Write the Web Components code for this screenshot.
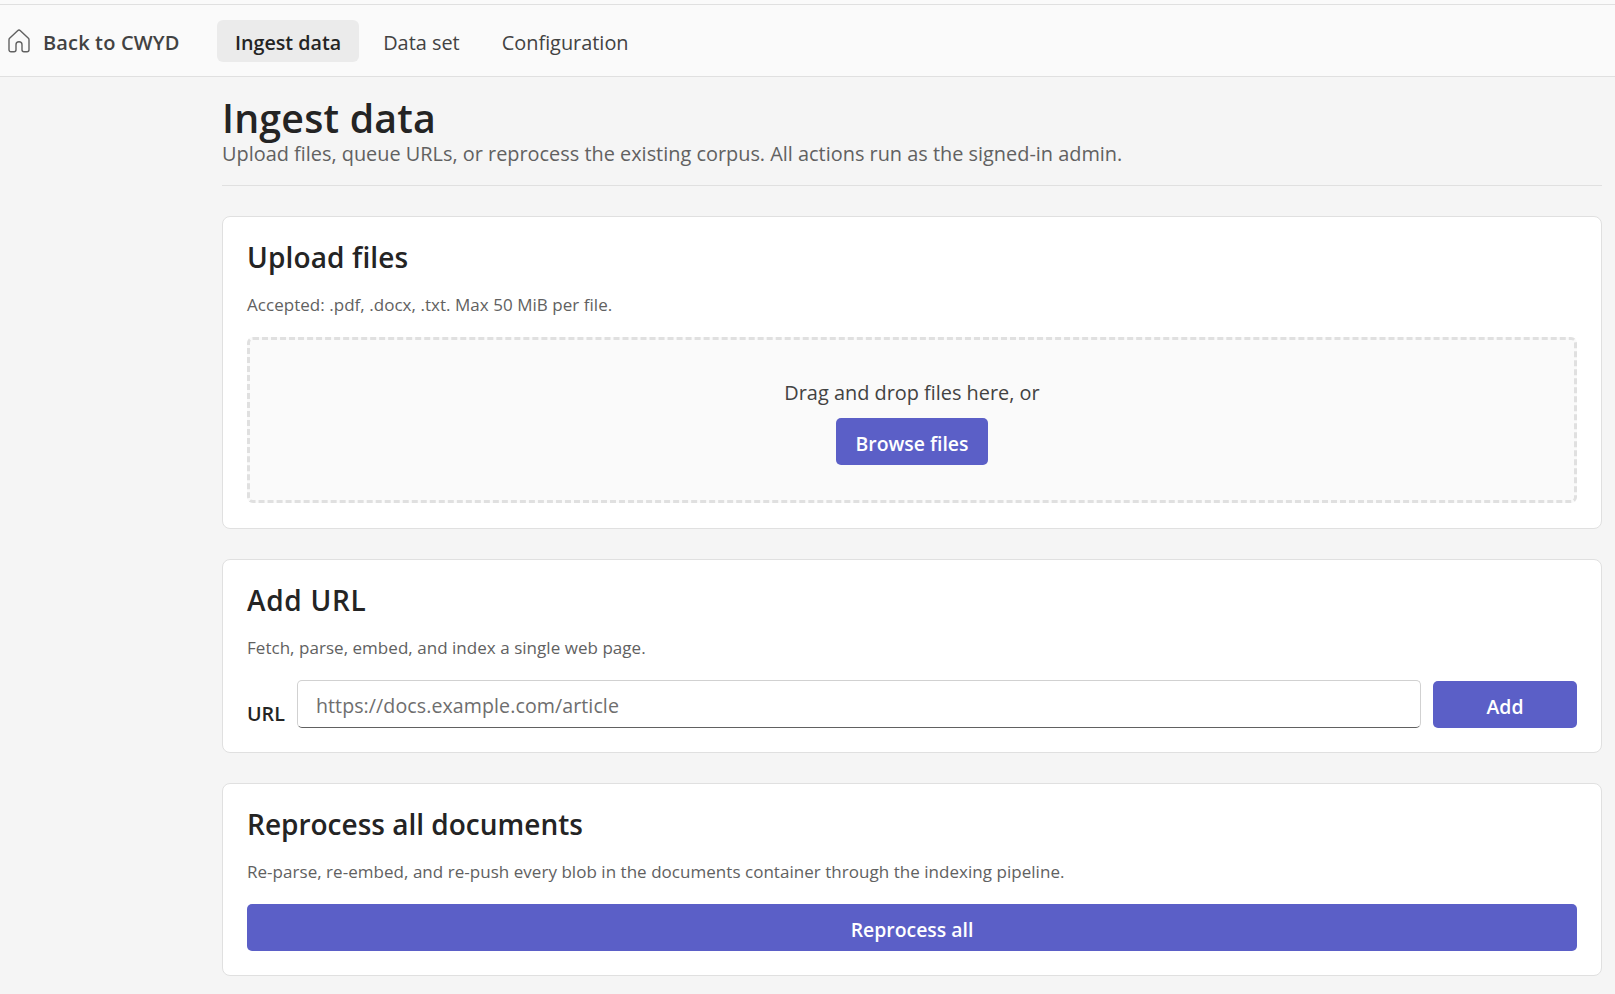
<!DOCTYPE html>
<html lang="en"><head><meta charset="utf-8"><title>Ingest data</title>
<style>
html,body{margin:0;height:100%;background:#f5f5f5}
body{font-family:"Open Sans","Noto Sans",sans-serif;color:#242424}
</style></head>
<body>
<template id="t-shell"><style>
:host{display:flex;flex-direction:column;min-height:994px;box-sizing:border-box;background:#f5f5f5}
.top{height:4px;background:#fafafa;flex:none}
main{display:flex;flex-direction:column;padding:19px 13px 0 222px}
.cards{display:flex;flex-direction:column;gap:30.5px;padding-top:30px}
</style><div class="top"></div><slot name="nav"></slot><main><slot name="header"></slot><div class="cards"><slot></slot></div></main></template>

<template id="t-nav"><style>
:host{display:flex;align-items:center;height:73px;box-sizing:border-box;background:#fafafa;border-top:1px solid #e0e0e0;border-bottom:1px solid #e0e0e0;padding:1px 0 0 8px}
a{display:flex;align-items:center;gap:13px;font-size:20px;font-weight:600;letter-spacing:.15px;color:#424242;text-decoration:none;line-height:32px;width:209px;flex:none;box-sizing:border-box}
svg{display:block;flex:none;margin-top:0}
.tabs{display:flex;gap:6px}
</style><a href="#"><svg width="22" height="24" viewBox="0 0 22 24" fill="none" stroke="#616161" stroke-width="1.4" stroke-linejoin="round"><path d="M9.600 1.700a2 2 0 0 1 2.800 0l8 7.600a2 2 0 0 1 .6 1.400v10.100a2 2 0 0 1-2 2h-3a2 2 0 0 1-2-2v-5a3 3 0 0 0-6 0v5a2 2 0 0 1-2 2H3a2 2 0 0 1-2-2V10.700a2 2 0 0 1 .6-1.400z"/></svg><span style="padding-top:3px"><slot name="back"></slot></span></a><div class="tabs"><slot></slot></div></template>

<template id="t-tab"><style>
:host{display:block;height:42px;line-height:46px;padding:0 18px;border-radius:6px;font-size:19.9px;color:#424242;white-space:nowrap}
:host([active]){background:#ebebeb;color:#242424;font-weight:600;font-size:19.7px}
</style><slot></slot></template>

<template id="t-head"><style>
:host{display:block;border-bottom:1px solid #e0e0e0;padding-bottom:17px}
h1{margin:0;font-size:39.3px;font-weight:600;line-height:44px;letter-spacing:.2px;color:#242424}
p{margin:0;font-size:19.9px;line-height:28px;color:#616161}
</style><h1><slot name="title"></slot></h1><p><slot name="sub"></slot></p></template>

<template id="t-card"><style>
:host{display:block;box-sizing:border-box;background:#fff;border:1px solid #e0e0e0;border-radius:8px;padding:19.5px 24px 24px 24px}
:host([roomy]){padding-bottom:25px}
:host([tight]){padding-top:20px;padding-bottom:23.5px}
h2{margin:0;font-size:28px;font-weight:600;line-height:40px;color:#242424}
p{margin:16px 0 20px;font-size:17px;line-height:24px;letter-spacing:.035px;color:#616161}
</style><h2><slot name="title"></slot></h2><p><slot name="desc"></slot></p><slot></slot></template>

<template id="t-drop"><style>
:host{display:flex;flex-direction:column;align-items:center;height:166px;box-sizing:border-box;background:#fafafa;border:3px dashed #e0e0e0;border-radius:6px;padding-top:39px;gap:11px}
span{font-size:19.9px;line-height:28px;color:#424242}
</style><span><slot name="text"></slot></span><slot></slot></template>

<template id="t-btn"><style>
:host{display:flex;align-items:center;justify-content:center;height:47px;box-sizing:border-box;background:#5b5fc7;border-radius:5px;color:#fff;font-weight:600;font-size:19.4px;white-space:nowrap;padding:4px 19.5px 0}
:host([fixed]){flex:none;width:144px;padding:4px 0 0}
:host([wide]){padding-top:3px}
</style><slot></slot></template>

<template id="t-url"><style>
:host{display:flex;align-items:flex-end;gap:12px}
label{flex:none;font-size:19.7px;font-weight:600;line-height:28px;color:#242424}
.input{flex:1;height:48px;box-sizing:border-box;background:#fff;border:1px solid #d1d1d1;border-bottom-color:#616161;border-radius:5px;padding:0 18px;font-size:19.6px;letter-spacing:.08px;line-height:50px;color:#6e6e6e}
.end{flex:none;display:flex}
</style><label><slot name="label"></slot></label><div class="input"><slot name="placeholder"></slot></div><span class="end"><slot></slot></span></template>

<script>
function reg(name,tpl){
  customElements.define(name,class extends HTMLElement{
    constructor(){super();this.attachShadow({mode:'open'}).appendChild(document.getElementById(tpl).content.cloneNode(true));}
  });
}
reg('app-shell','t-shell');reg('admin-nav','t-nav');reg('nav-tab','t-tab');reg('page-head','t-head');
reg('panel-card','t-card');reg('drop-zone','t-drop');reg('ui-button','t-btn');reg('url-field','t-url');
</script>

<app-shell>
  <admin-nav slot="nav">
    <span slot="back">Back to CWYD</span>
    <nav-tab active>Ingest data</nav-tab>
    <nav-tab>Data set</nav-tab>
    <nav-tab>Configuration</nav-tab>
  </admin-nav>
  <page-head slot="header">
    <span slot="title">Ingest data</span>
    <span slot="sub">Upload files, queue URLs, or reprocess the existing corpus. All actions run as the signed-in admin.</span>
  </page-head>
  <panel-card roomy>
    <span slot="title" style="letter-spacing:.15px">Upload files</span>
    <span slot="desc">Accepted: .pdf, .docx, .txt. Max 50 MiB per file.</span>
    <drop-zone>
      <span slot="text">Drag and drop files here, or</span>
      <ui-button>Browse files</ui-button>
    </drop-zone>
  </panel-card>
  <panel-card>
    <span slot="title" style="letter-spacing:.7px">Add URL</span>
    <span slot="desc">Fetch, parse, embed, and index a single web page.</span>
    <url-field>
      <span slot="label">URL</span>
      <span slot="placeholder">https://docs.example.com/article</span>
      <ui-button fixed>Add</ui-button>
    </url-field>
  </panel-card>
  <panel-card tight>
    <span slot="title">Reprocess all documents</span>
    <span slot="desc">Re-parse, re-embed, and re-push every blob in the documents container through the indexing pipeline.</span>
    <ui-button wide>Reprocess all</ui-button>
  </panel-card>
</app-shell>
</body></html>
